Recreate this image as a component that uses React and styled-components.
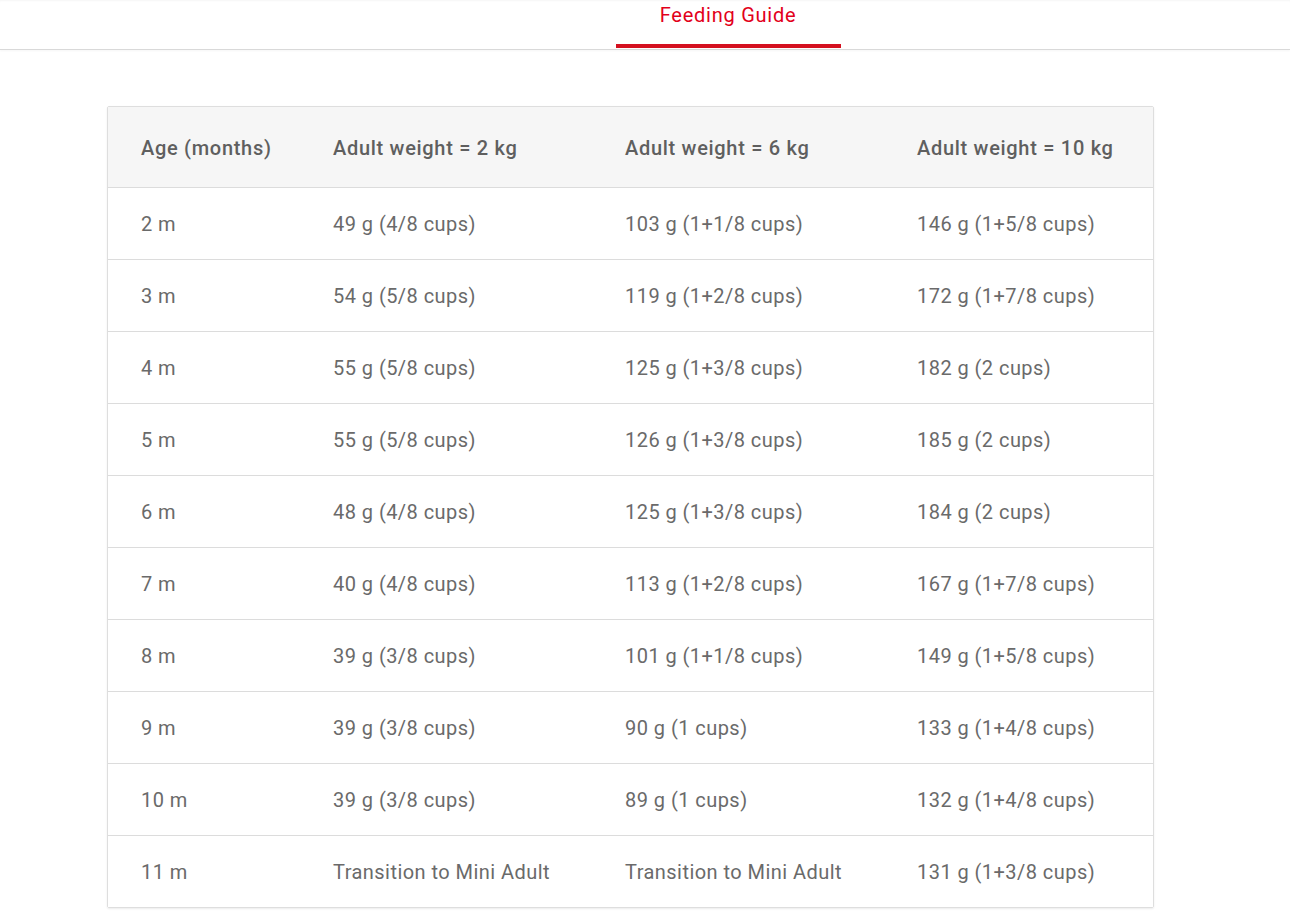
import React from "react";
import styled, { createGlobalStyle } from "styled-components";

const Global = createGlobalStyle`
  html, body { margin: 0; padding: 0; background: #fff; }
  body { font-family: Roboto, "DejaVu Sans", sans-serif; }
`;

const Page = styled.div`
  width: 1290px;
  min-height: 912px;
  background: #fff;
  overflow: hidden;
  box-shadow: inset 0 2px 2px -1px rgba(0,0,0,0.04);
`;

const TabBar = styled.div`
  display: flex;
  justify-content: center;
  height: 49px;
  border-bottom: 1px solid #d9d9d9;
  box-shadow: 0 1px 2px rgba(0,0,0,0.04);
  padding-left: 166px;
`;

const Tab = styled.div`
  width: 225px;
  box-sizing: border-box;
  display: flex;
  justify-content: center;
  padding-top: 3px;
  font-size: 20px;
  letter-spacing: 0.75px;
  color: #e2001a;
  border-bottom: ${p => (p.$active ? "4px solid #d4101f" : "none")};
  margin-bottom: 1px;
`;

const Content = styled.div`
  padding: 56px 0 0 107px;
`;

const Table = styled.div`
  width: 1047px;
  box-sizing: border-box;
  border: 1px solid #dedede;
  border-radius: 2px;
  box-shadow: 0 1px 2px rgba(0,0,0,0.08);
`;

const Row = styled.div`
  display: grid;
  grid-template-columns: 191px 292px 292px 1fr;
  box-sizing: border-box;
  height: ${p => (p.$head ? "80px" : "72px")};
  padding-top: ${p => (p.$head ? "2px" : "1px")};
  background: ${p => (p.$head ? "#f6f6f6" : "#fff")};
  border-top: ${p => (p.$head ? "none" : "1px solid #dcdcdc")};
  align-items: center;
`;

const Cell = styled.div`
  padding-left: ${p => (p.$first ? "33px" : "34px")};
  font-size: 20px;
  letter-spacing: ${p => (p.$head ? "0.7px" : "0.45px")};
  color: ${p => (p.$head ? "#5f5f5f" : "#6a6a6a")};
  font-weight: ${p => (p.$head ? 500 : 400)};
  white-space: nowrap;
`;

const head = ["Age (months)", "Adult weight = 2 kg", "Adult weight = 6 kg", "Adult weight = 10 kg"];
const rows = [
  ["2 m", "49 g (4/8 cups)", "103 g (1+1/8 cups)", "146 g (1+5/8 cups)"],
  ["3 m", "54 g (5/8 cups)", "119 g (1+2/8 cups)", "172 g (1+7/8 cups)"],
  ["4 m", "55 g (5/8 cups)", "125 g (1+3/8 cups)", "182 g (2 cups)"],
  ["5 m", "55 g (5/8 cups)", "126 g (1+3/8 cups)", "185 g (2 cups)"],
  ["6 m", "48 g (4/8 cups)", "125 g (1+3/8 cups)", "184 g (2 cups)"],
  ["7 m", "40 g (4/8 cups)", "113 g (1+2/8 cups)", "167 g (1+7/8 cups)"],
  ["8 m", "39 g (3/8 cups)", "101 g (1+1/8 cups)", "149 g (1+5/8 cups)"],
  ["9 m", "39 g (3/8 cups)", "90 g (1 cups)", "133 g (1+4/8 cups)"],
  ["10 m", "39 g (3/8 cups)", "89 g (1 cups)", "132 g (1+4/8 cups)"],
  ["11 m", "Transition to Mini Adult", "Transition to Mini Adult", "131 g (1+3/8 cups)"],
];

export default function App() {
  return (
    <Page>
      <Global />
      <TabBar>
        <Tab $active>Feeding Guide</Tab>
      </TabBar>
      <Content>
        <Table>
          <Row $head>
            {head.map((h, i) => (
              <Cell key={i} $head $first={i === 0}>{h}</Cell>
            ))}
          </Row>
          {rows.map((r, ri) => (
            <Row key={ri}>
              {r.map((c, i) => (
                <Cell key={i} $first={i === 0}>{c}</Cell>
              ))}
            </Row>
          ))}
        </Table>
      </Content>
    </Page>
  );
}
